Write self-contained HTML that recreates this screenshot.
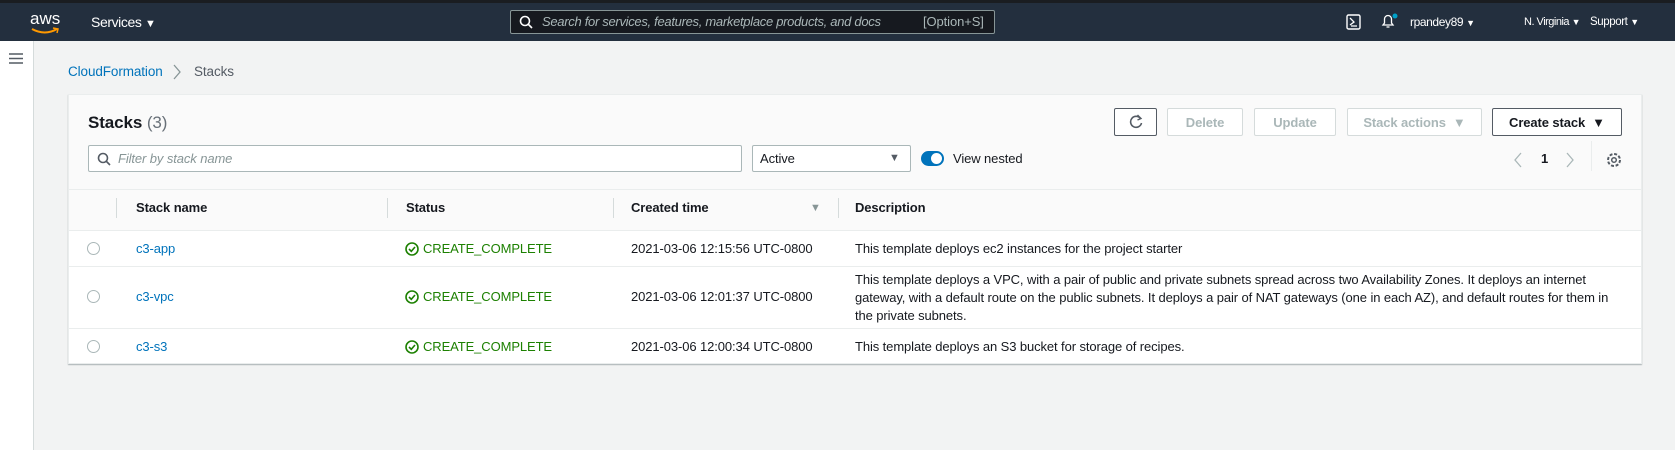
<!DOCTYPE html>
<html><head><meta charset="utf-8"><style>
*{box-sizing:border-box;margin:0;padding:0}
body{width:1675px;height:450px;overflow:hidden;background:#f2f3f3;font-family:"Liberation Sans",sans-serif;font-size:13px;letter-spacing:-0.1px;color:#16191f;position:relative}
.a{position:absolute;white-space:nowrap}
.nav{position:absolute;left:0;top:0;width:1675px;height:41px;background:#232f3e;border-top:3px solid #1a1d21}
.w{color:#fff;letter-spacing:-0.4px}
.ar{font-size:9px;letter-spacing:0}
.btn{position:absolute;top:108px;height:28px;border:1px solid #d5dbdb;background:#fff;color:#aab7b8;font-weight:bold;font-size:13px;display:flex;align-items:center;justify-content:center;border-radius:2px}
.th{position:absolute;top:200px;font-weight:bold}
.dv{position:absolute;top:198px;width:1px;height:20px;background:#d5dbdb}
.radio{position:absolute;width:13px;height:13px;border:1px solid #aab7b8;border-radius:50%;background:#fff}
.lnk{color:#0073bb}
.ok{color:#1d8102}
.ok svg{vertical-align:-3px;margin-right:4px}
</style></head><body>
<div class="nav">
 <div class="a w" style="left:30px;top:6px;font-size:17px;letter-spacing:0">aws</div>
 <svg class="a" style="left:30px;top:24px" width="30" height="8"><path d="M2 2 Q15 9 27 2" stroke="#ff9900" stroke-width="2" fill="none"/><path d="M23 1 L28 2 L27 6" stroke="#ff9900" stroke-width="1.5" fill="none"/></svg>
 <div class="a w" style="left:91px;top:11px;font-size:14px">Services <span class="ar" style="font-size:11px">▼</span></div>
 <div class="a" style="left:510px;top:7px;width:485px;height:24px;border:1px solid #879596;border-radius:2px;background:#16191f"></div>
 <svg class="a" style="left:519px;top:12px" width="14" height="14"><circle cx="6" cy="6" r="4.5" stroke="#fff" stroke-width="1.6" fill="none"/><path d="M9.5 9.5 L13 13" stroke="#fff" stroke-width="1.6"/></svg>
 <div class="a" style="left:542px;top:11px;color:#aab7b8;font-style:italic;font-size:13px;letter-spacing:-0.3px">Search for services, features, marketplace products, and docs</div>
 <div class="a" style="left:923px;top:11px;color:#aab7b8;font-size:13px">[Option+S]</div>
 <svg class="a" style="left:1346px;top:11px" width="15" height="16"><rect x="1" y="1" width="13" height="14" rx="1.5" stroke="#fff" stroke-width="1.4" fill="none"/><path d="M4 4 L8 8 L4 11 M5 12 H11" stroke="#fff" stroke-width="1.3" fill="none"/></svg>
 <svg class="a" style="left:1379px;top:9px" width="20" height="18"><path d="M4 13 H14 L12.5 11 V7 A3.5 3.5 0 0 0 5.5 7 V11 Z M7.5 15 H10.5" stroke="#fff" stroke-width="1.3" fill="none"/><circle cx="16" cy="4" r="2.5" fill="#00a1c9"/></svg>
 <div class="a w" style="left:1410px;top:12px;font-size:12px">rpandey89 <span class="ar">▼</span></div>
 <div class="a w" style="left:1524px;top:13px;font-size:11px;letter-spacing:-0.5px">N. Virginia <span class="ar">▼</span></div>
 <div class="a w" style="left:1590px;top:13px;font-size:11.5px">Support <span class="ar">▼</span></div>
</div>
<div class="a" style="left:0;top:41px;width:34px;height:409px;background:#fff;border-right:1px solid #d5dbdb"></div>
<svg class="a" style="left:9px;top:53px" width="14" height="11"><path d="M0 1H14M0 5.5H14M0 10H14" stroke="#545b64" stroke-width="1.6"/></svg>
<div class="a lnk" style="left:68px;top:64px;font-size:13.5px">CloudFormation</div>
<svg class="a" style="left:172px;top:63px" width="10" height="18"><path d="M2 2 L8 9 L2 16" stroke="#879596" stroke-width="1.3" fill="none"/></svg>
<div class="a" style="left:194px;top:64px;color:#545b64;font-size:13.5px">Stacks</div>

<div class="a" style="left:68px;top:94px;width:1574px;height:270px;background:#fafafa;border:1px solid #eaeded;box-shadow:0 1px 1px rgba(0,28,36,.3)"></div>
<div class="a" style="left:88px;top:113px;font-size:17px;font-weight:bold">Stacks <span style="color:#687078;font-weight:normal">(3)</span></div>
<div class="btn" style="left:1114px;width:43px;border-color:#545b64"><svg width="16" height="16"><path d="M12.5 4.5 A5.5 5.5 0 1 0 13.5 9" stroke="#545b64" stroke-width="1.6" fill="none"/><path d="M9.5 1 L13 4.5 L9.5 6" stroke="#545b64" stroke-width="1.4" fill="none"/></svg></div>
<div class="btn" style="left:1167px;width:76px">Delete</div>
<div class="btn" style="left:1254px;width:82px">Update</div>
<div class="btn" style="left:1347px;width:135px">Stack actions&nbsp;&nbsp;▼</div>
<div class="btn" style="left:1492px;width:130px;border-color:#545b64;color:#16191f">Create stack&nbsp;&nbsp;▼</div>

<div class="a" style="left:88px;top:145px;width:654px;height:27px;border:1px solid #aab7b8;background:#fff;border-radius:2px"></div>
<svg class="a" style="left:97px;top:152px" width="14" height="14"><circle cx="6" cy="6" r="4.5" stroke="#545b64" stroke-width="1.6" fill="none"/><path d="M9.5 9.5 L13 13" stroke="#545b64" stroke-width="1.6"/></svg>
<div class="a" style="left:118px;top:151px;color:#879596;font-style:italic">Filter by stack name</div>
<div class="a" style="left:752px;top:145px;width:159px;height:27px;border:1px solid #aab7b8;background:#fff;border-radius:2px"></div>
<div class="a" style="left:760px;top:151px">Active</div>
<div class="a" style="left:889px;top:152px;font-size:11px;color:#545b64">▼</div>
<div class="a" style="left:921px;top:151px;width:23px;height:15px;border-radius:8px;background:#0073bb"></div>
<div class="a" style="left:931px;top:153px;width:11px;height:11px;border-radius:50%;background:#fff"></div>
<div class="a" style="left:953px;top:151px">View nested</div>
<svg class="a" style="left:1513px;top:152px" width="10" height="16"><path d="M8 1 L2 8 L8 15" stroke="#aab7b8" stroke-width="1.3" fill="none"/></svg>
<div class="a" style="left:1541px;top:151px;font-weight:bold">1</div>
<svg class="a" style="left:1565px;top:152px" width="10" height="16"><path d="M2 1 L8 8 L2 15" stroke="#aab7b8" stroke-width="1.3" fill="none"/></svg>
<div class="a" style="left:1591px;top:141px;width:1px;height:30px;background:#eaeded"></div>
<svg class="a" style="left:1605px;top:151px" width="18" height="18"><circle cx="9" cy="9" r="6" stroke="#545b64" stroke-width="2" fill="none" stroke-dasharray="3 1.7"/><circle cx="9" cy="9" r="2.3" stroke="#545b64" stroke-width="1.5" fill="none"/></svg>

<div class="a" style="left:69px;top:189px;width:1572px;height:1px;background:#eaeded"></div>
<div class="dv" style="left:116px"></div><div class="dv" style="left:387px"></div><div class="dv" style="left:613px"></div><div class="dv" style="left:838px"></div>
<div class="th" style="left:136px">Stack name</div>
<div class="th" style="left:406px">Status</div>
<div class="th" style="left:631px">Created time</div>
<div class="a" style="left:810px;top:202px;font-size:11px;color:#879596">▼</div>
<div class="th" style="left:855px">Description</div>

<div class="a" style="left:69px;top:230px;width:1572px;height:133px;background:#fff"></div>
<div class="a" style="left:69px;top:230px;width:1572px;height:1px;background:#eaeded"></div>
<div class="a" style="left:69px;top:266px;width:1572px;height:1px;background:#eaeded"></div>
<div class="a" style="left:69px;top:328px;width:1572px;height:1px;background:#eaeded"></div>

<div class="radio" style="left:87px;top:242px"></div>
<div class="a lnk" style="left:136px;top:241px">c3-app</div>
<div class="a ok" style="left:405px;top:241px"><svg width="14" height="14"><circle cx="7" cy="7" r="6" stroke="#1d8102" stroke-width="1.6" fill="none"/><path d="M4 7 L6.3 9.3 L10 5" stroke="#1d8102" stroke-width="1.6" fill="none"/></svg>CREATE_COMPLETE</div>
<div class="a" style="left:631px;top:241px">2021-03-06 12:15:56 UTC-0800</div>
<div class="a" style="left:855px;top:241px">This template deploys ec2 instances for the project starter</div>

<div class="radio" style="left:87px;top:290px"></div>
<div class="a lnk" style="left:136px;top:289px">c3-vpc</div>
<div class="a ok" style="left:405px;top:289px"><svg width="14" height="14"><circle cx="7" cy="7" r="6" stroke="#1d8102" stroke-width="1.6" fill="none"/><path d="M4 7 L6.3 9.3 L10 5" stroke="#1d8102" stroke-width="1.6" fill="none"/></svg>CREATE_COMPLETE</div>
<div class="a" style="left:631px;top:289px">2021-03-06 12:01:37 UTC-0800</div>
<div class="a" style="left:855px;top:271px;line-height:18px">This template deploys a VPC, with a pair of public and private subnets spread across two Availability Zones. It deploys an internet<br>gateway, with a default route on the public subnets. It deploys a pair of NAT gateways (one in each AZ), and default routes for them in<br>the private subnets.</div>

<div class="radio" style="left:87px;top:340px"></div>
<div class="a lnk" style="left:136px;top:339px">c3-s3</div>
<div class="a ok" style="left:405px;top:339px"><svg width="14" height="14"><circle cx="7" cy="7" r="6" stroke="#1d8102" stroke-width="1.6" fill="none"/><path d="M4 7 L6.3 9.3 L10 5" stroke="#1d8102" stroke-width="1.6" fill="none"/></svg>CREATE_COMPLETE</div>
<div class="a" style="left:631px;top:339px">2021-03-06 12:00:34 UTC-0800</div>
<div class="a" style="left:855px;top:339px">This template deploys an S3 bucket for storage of recipes.</div>
</body></html>
